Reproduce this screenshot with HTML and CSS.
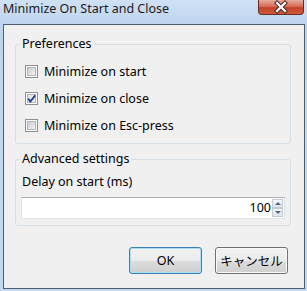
FILE: index.html
```html
<!DOCTYPE html>
<html lang="en">
<head>
  <meta charset="UTF-8">
  <title>Minimize On Start and Close</title>
  <link rel="stylesheet" href="styles.css">
</head>
<body>
  <div class="window">
    <div class="titlebar">
      <span class="title">Minimize On Start and Close</span>
      <button type="button" class="close">
        <svg width="44" height="14" viewBox="0 0 44 14">
          <path d="M18 3 L26 11 M26 3 L18 11" stroke="#4a2a26" stroke-width="4.2" stroke-linecap="square"/>
          <path d="M18 3 L26 11 M26 3 L18 11" stroke="#ffffff" stroke-width="2.2" stroke-linecap="square"/>
        </svg>
      </button>
    </div>
    <div class="client">
      <fieldset class="group prefs">
        <legend>Preferences</legend>
        <div class="group-body">
          <label class="check"><span class="box"></span>Minimize on start</label>
          <label class="check"><span class="box checked"><svg width="11" height="11" viewBox="0 0 11 11"><path d="M2.2 5.6 L4.4 8.6 L9.2 2.4" fill="none" stroke="#243c8c" stroke-width="1.8"/></svg></span>Minimize on close</label>
          <label class="check"><span class="box"></span>Minimize on Esc-press</label>
        </div>
      </fieldset>
      <fieldset class="group advanced">
        <legend>Advanced settings</legend>
        <div class="group-body">
          <div class="field-label">Delay on start (ms)</div>
          <div class="spin">
            <span class="value">100</span>
            <span class="arrows">
              <span class="arrow up"></span>
              <span class="arrow down"></span>
            </span>
          </div>
        </div>
      </fieldset>
      <div class="buttons">
        <button type="button" class="btn default">OK</button>
        <button type="button" class="btn">キャンセル</button>
      </div>
    </div>
  </div>
</body>
</html>
```

FILE: styles.css
```css
body {
  margin: 0;
  font-family: "Noto Sans", "Noto Sans CJK JP", sans-serif;
  font-size: 12.5px;
  color: #000;
}

.window {
  width: 307px;
  height: 291px;
  box-sizing: border-box;
  padding: 0 2px 2px 3px;
  background: linear-gradient(#d0e1f4, #bed5ee 24px, #c4d9f0);
  display: flex;
  flex-direction: column;
}

.titlebar {
  height: 24px;
  display: flex;
  justify-content: space-between;
  align-items: flex-start;
}

.title {
  line-height: 18px;
  color: #1a1a1a;
}

.close {
  width: 46px;
  height: 15px;
  margin-right: 1px;
  padding: 0;
  border: 1px solid #6a2e25;
  border-top: 0;
  border-radius: 0 0 4px 4px;
  background: linear-gradient(#e8ab9d, #d76c55 45%, #c4412b 55%, #cf5a3d);
  display: flex;
  align-items: center;
  justify-content: center;
}

.client {
  flex: 1;
  border: 1px solid #4f5c6b;
  background: #f0f0f0;
  display: flex;
  flex-direction: column;
}

.group {
  margin: 0 13px 0 11px;
  padding: 0;
  border: 1px solid #d5dfe5;
  border-radius: 3px;
  min-width: 0;
}

.group legend {
  margin-left: 4px;
  padding: 0 2px;
  line-height: 16px;
}

.prefs {
  margin-top: 11px;
}

.prefs .group-body {
  padding: 6px 0 4px 9px;
}

.check {
  height: 27px;
  display: flex;
  align-items: center;
  gap: 6px;
}

.box {
  position: relative;
  flex: none;
  width: 13px;
  height: 13px;
  box-sizing: border-box;
  border: 1px solid #8e8f8f;
  background: #fff;
}

.box::before {
  content: "";
  position: absolute;
  left: 1px;
  top: 1px;
  width: 9px;
  height: 9px;
  box-sizing: border-box;
  border: 1px solid #b0b5bb;
  background: linear-gradient(135deg, #c8cdd3, #f3f4f5);
}

.box.checked::before {
  background: linear-gradient(135deg, #dde1e6, #f6f7f8);
}

.box svg {
  position: absolute;
  left: 0;
  top: 0;
}

.advanced {
  margin-top: 7px;
}

.advanced .group-body {
  padding: 7px 5px 6px 5px;
}

.field-label {
  line-height: 16px;
  padding-left: 1px;
}

.spin {
  margin-top: 7px;
  height: 22px;
  box-sizing: border-box;
  border: 1px solid;
  border-color: #abadb3 #dbdfe6 #e3e9ef #e2e3ea;
  background: #fff;
  display: flex;
  align-items: center;
  justify-content: flex-end;
}

.value {
  padding-right: 1px;
  line-height: 16px;
}

.arrows {
  width: 11px;
  height: 18px;
  margin-right: 1px;
  display: flex;
  flex-direction: column;
}

.arrow {
  flex: 1;
  box-sizing: border-box;
  border: 1px solid #c3cad4;
  background: linear-gradient(#f6f7f9, #dfe4ea);
  display: flex;
  align-items: center;
  justify-content: center;
}

.arrow::before {
  content: "";
  border-left: 3px solid transparent;
  border-right: 3px solid transparent;
}

.up::before {
  border-bottom: 3px solid #4f6383;
}

.down::before {
  border-top: 3px solid #4f6383;
}

.buttons {
  margin: 21px 16px 0 0;
  display: flex;
  justify-content: flex-end;
  gap: 13px;
}

.btn {
  width: 73px;
  height: 27px;
  padding: 0;
  font: inherit;
  color: #000;
  border: 1px solid #707070;
  border-radius: 3px;
  background: linear-gradient(#f2f2f2, #ebebeb 50%, #dddddd 50%, #cfcfcf);
  box-shadow: inset 0 0 0 1px #fbfbfb;
}

.btn.default {
  border-color: #3c7fb1;
  box-shadow: inset 0 0 0 1px #a9def5;
}
```
